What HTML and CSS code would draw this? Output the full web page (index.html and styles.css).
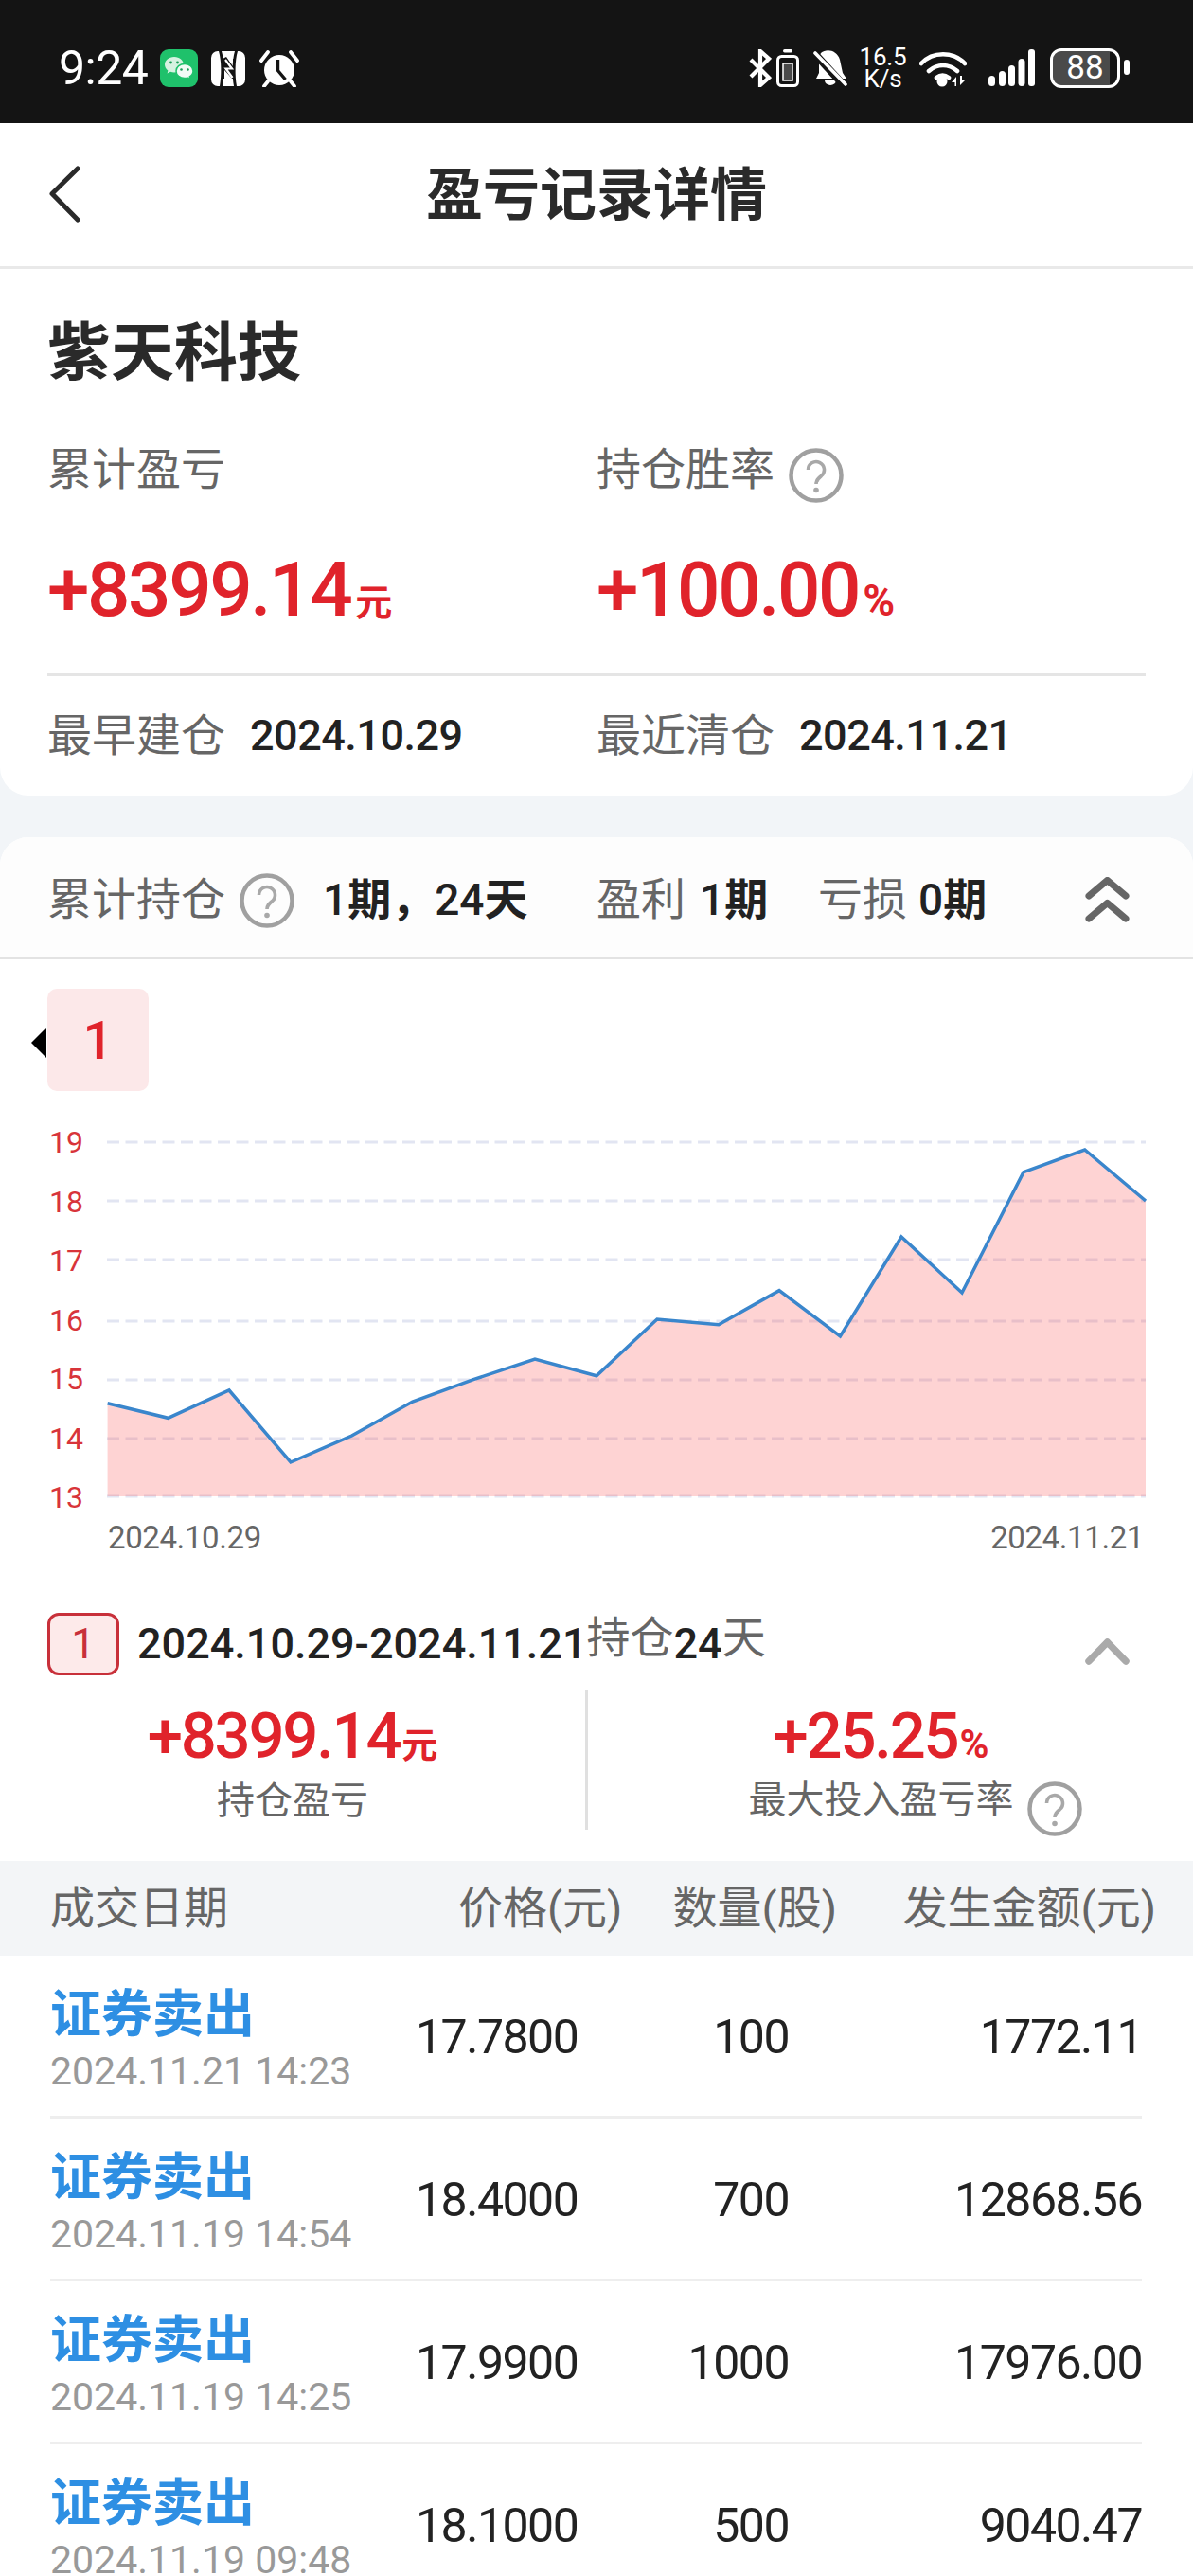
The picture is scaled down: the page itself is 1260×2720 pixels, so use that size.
FILE: index.html
```html
<!DOCTYPE html>
<html lang="zh-CN">
<head>
<meta charset="utf-8">
<title>盈亏记录详情</title>
<link rel="stylesheet" href="styles.css">
</head>
<body>
<svg class="defs" width="0" height="0">
  <symbol id="help" viewBox="0 0 58 58">
    <circle cx="29" cy="29" r="26.5" fill="none" stroke="#a0a0a0" stroke-width="4.5"/>
    <path d="M20.5 23a8.5 8.5 0 1 1 14 6.5c-3.500 2.800-5.500 4.500-5.500 8.500" fill="none" stroke="#a8a8a8" stroke-width="3.600"/>
    <circle cx="29" cy="44.500" r="2.800" fill="#a8a8a8"/>
  </symbol>
</svg>

<header class="statusbar">
  <div class="status-left">
    <span class="time">9:24</span>
    <svg class="ic-wechat" width="40" height="40" viewBox="0 0 40 40">
      <rect width="40" height="40" rx="9" fill="#1fc16b"/>
      <path d="M15 8c-5.800 0-10 3.700-10 8.300 0 2.600 1.300 4.800 3.400 6.300l-.8 3 3.400-1.800c1.300.4 2.600.6 4 .6 5.700 0 10-3.700 10-8.100S20.700 8 15 8z" fill="#d6f2e1"/>
      <path d="M26 15.500c-5 0-9 3.300-9 7.500s4 7.500 9 7.500c1 0 2-.1 3-.4l3 1.600-.7-2.700c2.300-1.400 3.700-3.500 3.700-6 0-4.200-4-7.500-9-7.500z" fill="#f2fbf6" stroke="#1fc16b" stroke-width="1.500"/>
      <circle cx="11.500" cy="14" r="1.400" fill="#1a9c57"/><circle cx="18.500" cy="14" r="1.400" fill="#1a9c57"/>
      <circle cx="22.500" cy="21.500" r="1.300" fill="#1a9c57"/><circle cx="29.500" cy="21.500" r="1.300" fill="#1a9c57"/>
    </svg>
    <svg class="ic-nfc" width="36" height="37" viewBox="0 0 36 37">
      <rect width="36" height="37" rx="7" fill="#fff"/>
      <path d="M8 0c3 10 3 26 1 37h3C14 26 14 10 11 0zM25 0c-3 10-3 26-1 37h3c-2-11-2-27 1-37z" fill="#141414"/>
      <path d="M16 6l7 10v-8h2v21h-3L14 20v9h-2V8z" fill="#141414"/>
      <path d="M15 9l7 9.500-6.500 0 7 9.500" fill="none" stroke="#fff" stroke-width="2.200"/>
    </svg>
    <svg class="ic-alarm" width="42" height="39" viewBox="0 0 42 39">
      <circle cx="21" cy="21" r="16" fill="#fff"/>
      <path d="M19.500 10v11.500l8 9.500" fill="none" stroke="#141414" stroke-width="3.400"/>
      <path d="M2 11L9 2M40 11L33 2M9 33l-4 5M33 33l4 5" fill="none" stroke="#fff" stroke-width="3.800" stroke-linecap="round"/>
    </svg>
  </div>
  <div class="status-right">
    <svg width="24" height="40" viewBox="0 0 24 40">
      <path d="M2 11l19 19-9 8V2l9 8L2 29" fill="none" stroke="#fff" stroke-width="4.200"/>
    </svg>
    <svg class="ic-saver" width="24" height="40" viewBox="0 0 24 40">
      <rect x="7" y="0" width="10" height="3.500" rx="1.700" fill="#fff"/>
      <rect x="1.500" y="7.500" width="21" height="31" rx="4" fill="none" stroke="#fff" stroke-width="3"/>
      <rect x="7" y="15" width="10" height="18" fill="#4a4a4a" stroke="#fff" stroke-width="1.500"/>
    </svg>
    <svg class="ic-bell" width="36" height="40" viewBox="0 0 36 40">
      <path d="M8 4c6-5 17-3 20 7l3 14 4 6H3l3-6V8z" fill="#fff"/>
      <path d="M12 33a6 5 0 0 0 12 0z" fill="#fff"/>
      <path d="M-1 2l34 37" stroke="#141414" stroke-width="8"/>
      <path d="M2 4l32 33" stroke="#fff" stroke-width="3.600" stroke-linecap="round"/>
    </svg>
    <div class="speed"><span>16.5</span><span>K/s</span></div>
    <svg class="ic-wifi" width="50" height="40" viewBox="0 0 50 40">
      <path d="M2 15C14 2 36 2 48 15M10 23c9-8 21-8 30 0M18 30c4-3 9-3 13 0" fill="none" stroke="#fff" stroke-width="4.600" stroke-linecap="round"/>
      <circle cx="24" cy="34" r="5.500" fill="#fff"/>
      <path d="M34 35l5-6v10h-1.500v-4zM43 28v10l6-6h-4V28z" fill="#fff"/>
    </svg>
    <svg class="ic-signal" width="49" height="40" viewBox="0 0 49 40">
      <rect x="0" y="28" width="7" height="11" rx="3.500" fill="#fff"/>
      <rect x="11" y="23" width="7" height="16" rx="3.500" fill="#fff"/>
      <rect x="21" y="17" width="7" height="22" rx="3.500" fill="#fff"/>
      <rect x="31.500" y="10" width="7" height="29" rx="3.500" fill="#fff"/>
      <rect x="42" y="0" width="7" height="39" rx="3" fill="#fff"/>
    </svg>
    <div class="battery"><span>88</span></div>
  </div>
</header>

<nav class="navbar">
  <svg class="back" width="34" height="60" viewBox="0 0 34 60">
    <path d="M30 3L3 29.500 30 57" fill="none" stroke="#2a2a2a" stroke-width="5" stroke-linecap="round" stroke-linejoin="round"/>
  </svg>
  <h1 class="nav-title">盈亏记录详情</h1>
</nav>

<section class="summary">
  <h2 class="stock-name">紫天科技</h2>
  <div class="two-col labels">
    <div class="label-cell">累计盈亏</div>
    <div class="label-cell">持仓胜率<svg class="help help-a"><use href="#help"/></svg></div>
  </div>
  <div class="two-col values">
    <div class="big-value">+8399.14<span class="unit">元</span></div>
    <div class="big-value">+100.00<span class="unit unit-pct">%</span></div>
  </div>
  <div class="two-col dates">
    <div class="date-cell"><span class="label-text">最早建仓</span><span class="date-val">2024.10.29</span></div>
    <div class="date-cell"><span class="label-text">最近清仓</span><span class="date-val">2024.11.21</span></div>
  </div>
</section>

<section class="holdings">
  <div class="hold-head">
    <div class="hh-group hh-total">
      <span class="label-text">累计持仓</span><svg class="help help-b"><use href="#help"/></svg><span class="hh-val hh-val-a"><b>1</b><i>期，</i><b>24</b><i>天</i></span>
    </div>
    <div class="hh-group hh-profit">
      <span class="label-text">盈利</span><span class="hh-val hh-val-b"><b>1</b><i>期</i></span>
    </div>
    <div class="hh-group hh-loss">
      <span class="label-text">亏损</span><span class="hh-val hh-val-c"><b>0</b><i>期</i></span>
    </div>
    <svg class="double-up" width="47" height="48" viewBox="0 0 47 48">
      <path d="M4 20L23.500 3.500 43 20M4 44L23.500 27.500 43 44" fill="none" stroke="#666" stroke-width="7" stroke-linecap="round" stroke-linejoin="round"/>
    </svg>
  </div>

  <div class="period-tab-row">
    <div class="period-tab">1</div>
  </div>

  <svg class="chart" width="1260" height="490" viewBox="0 1160 1260 490">
    <g class="grid">
      <path d="M113 1206H1210"/><path d="M113 1268H1210"/><path d="M113 1330H1210"/><path d="M113 1395H1210"/><path d="M113 1457H1210"/><path d="M113 1519H1210"/><path d="M113 1580H1210"/>
    </g>
    <polygon class="area" points="113.600,1481.700 177.500,1497.300 242,1468 307,1544 371.500,1516 435.700,1480 500,1456.700 565,1435 630,1452.700 694,1393 759,1398.700 823,1362.700 887.400,1411 952,1306 1016,1365 1081,1237.700 1145.700,1214 1210,1268 1210,1580 113.600,1580"/>
    <polyline class="line" points="113.600,1481.700 177.500,1497.300 242,1468 307,1544 371.500,1516 435.700,1480 500,1456.700 565,1435 630,1452.700 694,1393 759,1398.700 823,1362.700 887.400,1411 952,1306 1016,1365 1081,1237.700 1145.700,1214 1210,1268"/>
    <g class="y-labels">
      <text x="52" y="1217">19</text><text x="52" y="1280">18</text><text x="52" y="1342">17</text><text x="52" y="1405">16</text><text x="52" y="1467">15</text><text x="52" y="1530">14</text><text x="52" y="1592">13</text>
    </g>
    <g class="x-labels">
      <text x="114" y="1635">2024.10.29</text>
      <text x="1208" y="1635" text-anchor="end">2024.11.21</text>
    </g>
  </svg>

  <div class="period-row">
    <div class="period-badge">1</div>
    <div class="period-range">2024.10.29-2024.11.21<span class="raised">持仓</span>24<span class="raised">天</span></div>
    <svg class="chev-up" width="47" height="28" viewBox="0 0 47 28">
      <path d="M4 24L23.500 4 43 24" fill="none" stroke="#aaa" stroke-width="7.500" stroke-linecap="round" stroke-linejoin="round"/>
    </svg>
  </div>

  <div class="period-stats">
    <div class="ps-cell">
      <div class="ps-value">+8399.14<span class="ps-unit">元</span></div>
      <div class="ps-label">持仓盈亏</div>
    </div>
    <div class="ps-cell ps-right">
      <div class="ps-value">+25.25<span class="ps-unit ps-pct">%</span></div>
      <div class="ps-label">最大投入盈亏率<svg class="help help-c"><use href="#help"/></svg></div>
    </div>
  </div>

  <div class="table-head">
    <div class="th-date">成交日期</div>
    <div>价格(元)</div>
    <div>数量(股)</div>
    <div>发生金额(元)</div>
  </div>

  <div class="trade">
    <div class="t-main"><div class="t-type">证券卖出</div><div class="t-time">2024.11.21 14:23</div></div>
    <div class="t-price">17.7800</div><div class="t-num">100</div><div class="t-num">1772.11</div>
  </div>
  <div class="trade">
    <div class="t-main"><div class="t-type">证券卖出</div><div class="t-time">2024.11.19 14:54</div></div>
    <div class="t-price">18.4000</div><div class="t-num">700</div><div class="t-num">12868.56</div>
  </div>
  <div class="trade">
    <div class="t-main"><div class="t-type">证券卖出</div><div class="t-time">2024.11.19 14:25</div></div>
    <div class="t-price">17.9900</div><div class="t-num">1000</div><div class="t-num">17976.00</div>
  </div>
  <div class="trade">
    <div class="t-main"><div class="t-type">证券卖出</div><div class="t-time">2024.11.19 09:48</div></div>
    <div class="t-price">18.1000</div><div class="t-num">500</div><div class="t-num">9040.47</div>
  </div>
</section>
</body>
</html>
```

FILE: styles.css
```css
* { box-sizing: border-box; }
html, body { margin: 0; padding: 0; }
body {
  width: 1260px;
  height: 2720px;
  overflow: hidden;
  background: #f2f5f8;
  font-family: Roboto, "Noto Sans CJK SC", sans-serif;
  color: #222;
}
.defs { position: absolute; }
svg { display: block; flex: none; }

/* status bar */
.statusbar {
  height: 130px;
  background: #141414;
  display: flex;
  justify-content: space-between;
  align-items: center;
  padding: 14px 67px 0 62px;
  color: #fff;
}
.status-left, .status-right { display: flex; align-items: center; }
.time { font-size: 50px; line-height: 50px; letter-spacing: -.5px; width: 94px; white-space: nowrap; }
.ic-wechat { margin-left: 13px; }
.ic-nfc { margin-left: 14px; }
.ic-alarm { margin-left: 15px; }
.ic-saver { margin-left: 5px; }
.ic-bell { margin-left: 15px; }
.speed { margin-left: 12px; width: 51px; display: flex; flex-direction: column; align-items: center; font-size: 26px; line-height: 23px; letter-spacing: -.2px; }
.ic-wifi { margin-left: 13px; }
.ic-signal { margin-left: 23px; }
.battery {
  position: relative;
  margin-left: 16px;
  margin-right: 10px;
  width: 74px;
  height: 42px;
  border: 3px solid #fff;
  border-radius: 12px;
  background: linear-gradient(90deg, #4a4a4a 88%, transparent 88%);
  background-clip: padding-box;
  display: flex;
  align-items: center;
  justify-content: center;
  font-size: 35px;
  line-height: 36px;
}
.battery::after {
  content: "";
  position: absolute;
  right: -13px;
  top: 9px;
  width: 6px;
  height: 16px;
  border-radius: 3px;
  background: #fff;
}

/* nav */
.navbar {
  height: 154px;
  background: #fff;
  border-bottom: 3px solid #e9e9e9;
  display: grid;
  grid-template-columns: 1fr auto 1fr;
  align-items: center;
}
.back { margin-left: 52px; margin-top: -2px; }
.nav-title { grid-column: 2; margin: 2px 0 0; font-size: 60px; line-height: 70px; font-weight: 700; color: #2a2a2a; }

/* summary card */
.summary {
  height: 556px;
  background: #fff;
  border-radius: 0 0 30px 30px;
  padding: 56px 50px 0;
}
.stock-name { margin: 0; font-size: 67px; line-height: 66px; font-weight: 700; color: #2a2a2a; }
.two-col { display: grid; grid-template-columns: 580px 580px; }
.labels { margin-top: 60px; }
.label-cell, .label-text { font-size: 47px; line-height: 60px; color: #666; white-space: nowrap; }
.label-cell { display: flex; align-items: flex-start; }
.help { width: 58px; height: 58px; }
.help-a { margin: 7px 0 0 15px; }
.values { margin-top: 52px; }
.big-value { font-size: 80px; line-height: 80px; font-weight: 500; letter-spacing: -2.400px; color: #e0232b; white-space: nowrap; }
.unit { font-size: 39px; font-weight: 700; letter-spacing: 0; margin-left: 5px; }
.unit-pct { font-size: 46px; margin-left: 4px; }
.dates { margin-top: 34px; border-top: 3px solid #e5e5e5; padding-top: 33px; }
.date-cell { display: flex; align-items: center; height: 60px; }
.date-val { margin-left: 26px; font-size: 45px; line-height: 60px; font-weight: 500; letter-spacing: -.5px; color: #222; white-space: nowrap; }

/* holdings */
.holdings { margin-top: 44px; background: #fff; border-radius: 30px 30px 0 0; }
.hold-head {
  height: 129px;
  background: #fdfdfd;
  border-radius: 30px 30px 0 0;
  border-bottom: 3px solid #e3e3e3;
  display: flex;
  align-items: center;
  padding: 5px 0 0 50px;
}
.hh-group { display: flex; align-items: center; white-space: nowrap; }
.hh-total { width: 580px; }
.hh-profit { width: 234px; }
.hh-loss { width: 282px; }
.help-b { margin-left: 15px; margin-top: 2px; }
.hh-val { font-size: 46px; line-height: 60px; font-weight: 700; color: #222; }
.hh-val b { font-weight: 500; }
.hh-val i { font-style: normal; }
.hh-val-a { margin-left: 30px; }
.hh-val-b { margin-left: 15px; }
.hh-val-c { margin-left: 12px; }

.period-tab-row { padding: 31px 0 0 50px; }
.period-tab {
  position: relative;
  width: 107px;
  height: 108px;
  border-radius: 10px;
  background: #fce8e9;
  color: #e0232b;
  font-size: 56px;
  font-weight: 500;
  line-height: 110px;
  text-align: center;
}
.period-tab::before {
  content: "";
  position: absolute;
  left: -17px;
  top: 41px;
  border-style: solid;
  border-width: 16px 16px 16px 0;
  border-color: transparent #000 transparent transparent;
}

.chart { margin-top: 8px; }
.grid path { stroke: #e2e5f2; stroke-width: 3; stroke-dasharray: 13 6.500; fill: none; }
.area { fill: rgba(250, 80, 80, .25); }
.line { fill: none; stroke: #3a86cc; stroke-width: 3.500; stroke-linejoin: miter; }
.y-labels text { font-family: Roboto, sans-serif; font-size: 32px; fill: #d8343a; }
.x-labels text { font-family: Roboto, sans-serif; font-size: 33px; fill: #666; letter-spacing: -.4px; }

.period-row { display: flex; align-items: flex-start; padding: 53px 67px 0 50px; height: 134px; }
.period-badge {
  width: 76px;
  height: 66px;
  border: 3px solid #c8303a;
  border-radius: 12px;
  background: #fdeaea;
  color: #c8303a;
  font-size: 45px;
  line-height: 60px;
  text-align: center;
}
.period-range { margin-left: 19px; font-size: 45px; line-height: 66px; font-weight: 500; color: #222; white-space: nowrap; }
.raised { font-size: 46px; font-weight: 400; color: #666; vertical-align: 6px; line-height: 1; }
.chev-up { margin-left: auto; margin-top: 27px; }

.period-stats { display: grid; grid-template-columns: 618px 642px; height: 148px; }
.ps-cell { display: flex; flex-direction: column; align-items: center; padding-top: 14px; }
.ps-right { border-left: 3px solid #e0e0e0; padding-right: 20px; }
.ps-value { font-size: 67px; line-height: 70px; font-weight: 500; letter-spacing: -2.200px; color: #e0232b; white-space: nowrap; }
.ps-unit { font-size: 38px; font-weight: 700; letter-spacing: 0; margin-left: 2px; }
.ps-pct { font-size: 42px; }
.ps-label { position: relative; margin-top: -1px; font-size: 40px; line-height: 50px; color: #666; white-space: nowrap; }
.help-c { position: absolute; left: 294px; top: 5px; }

.table-head {
  margin-top: 33px;
  height: 100px;
  background: #f3f5f7;
  display: grid;
  grid-template-columns: 431px 170px 230px 337px;
  align-items: center;
  padding-left: 53px;
  font-size: 47px;
  line-height: 60px;
  color: #666;
  text-align: right;
  white-space: nowrap;
}
.th-date { text-align: left; }

.trade {
  margin: 0 54px 0 53px;
  height: 172px;
  border-bottom: 3px solid #eee;
  display: grid;
  grid-template-columns: 386px 172px 222px 1fr;
  align-items: center;
  padding-top: 2px;
  font-size: 50px;
  line-height: 60px;
  color: #222;
  letter-spacing: -1.500px;
}
.t-main { align-self: start; padding: 31px 0 0; letter-spacing: 0; }
.t-type { font-size: 54px; line-height: 60px; font-weight: 700; color: #2e8fe3; white-space: nowrap; }
.t-time { margin-top: 4px; font-size: 41px; line-height: 50px; color: #999; white-space: nowrap; }
.t-num { text-align: right; }
```
